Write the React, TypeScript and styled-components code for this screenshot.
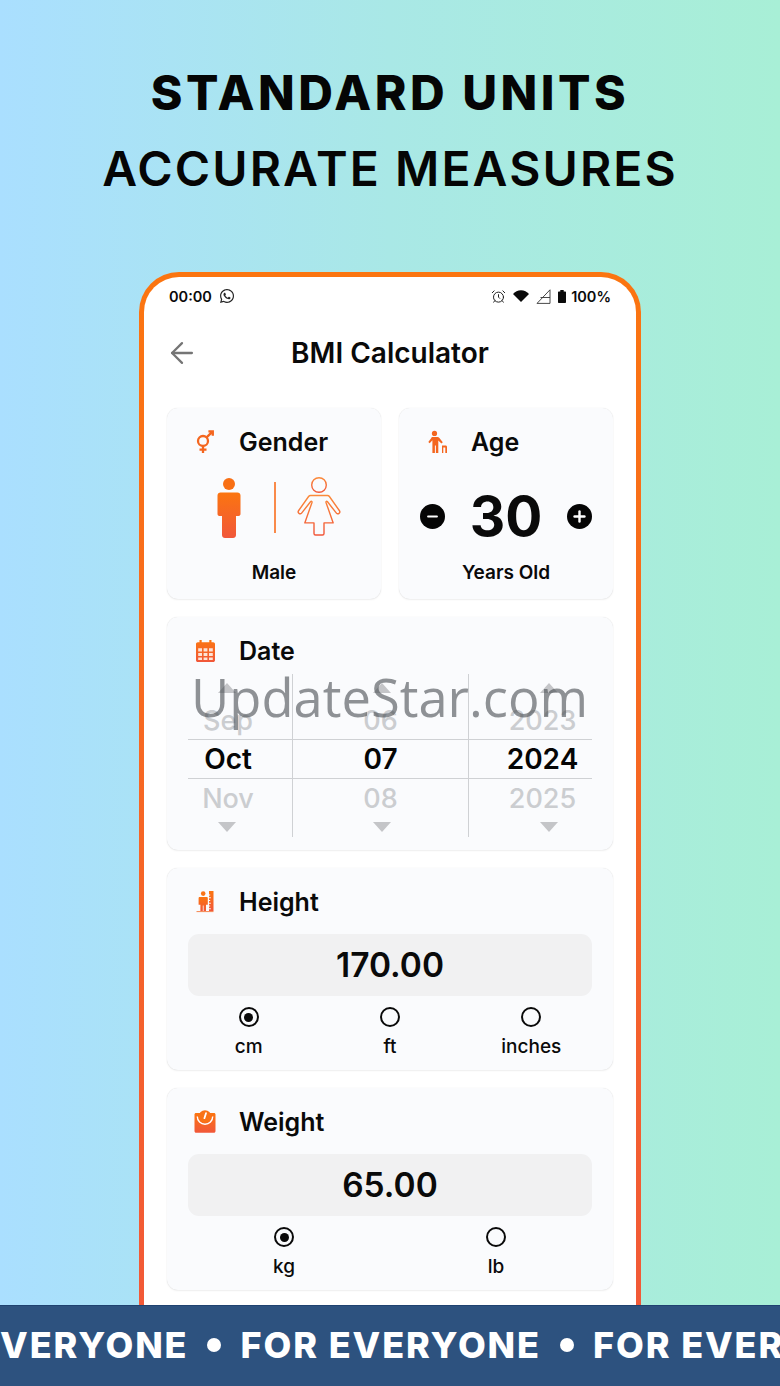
import React from "react";
import styled, { createGlobalStyle } from "styled-components";
import { AlarmClock, ArrowLeft, Minus, Plus } from "lucide-react";
import { FaWhatsapp } from "react-icons/fa";

const GlobalStyle = createGlobalStyle`
  html, body {
    margin: 0;
    padding: 0;
  }

  body {
    font-family: "Inter", "Liberation Sans", sans-serif;
    color: #0a0a0a;
  }

  * {
    box-sizing: border-box;
  }
`;

const IconGradient = ({ id }: { id: string }) => (
  <defs>
    <linearGradient id={id} x1="0" y1="0" x2="0" y2="1">
      <stop offset="0%" stopColor="#fb7510" />
      <stop offset="100%" stopColor="#f1573a" />
    </linearGradient>
  </defs>
);

const GenderIcon = () => (
  <svg width="24" height="24" viewBox="0 0 24 24" fill="none" stroke="#f4661f" strokeWidth="2.3">
    <circle cx="10" cy="11" r="5" />
    <path d="M13.6 7.4 19.5 1.6M15.4 1.4h4.4v4.400M10 16v7M6.500 19.600h7" />
  </svg>
);

const AgeIcon = () => (
  <svg width="24" height="24" viewBox="0 0 24 24" fill="#f4661f">
    <circle cx="9.500" cy="3.400" r="2.600" />
    <path d="M6.500 7h6c.8 0 1.400.3 1.900 1l3.400 4.200-1.400 1.200-3.100-3V23h-2.400v-7.600h-1V23H7.400V10.200l-2.700 3-1.400-1.200 3-4c.2-.6.4-1 .7-1Z" />
    <path d="M17 15.600h3.600c.8 0 1.400.6 1.400 1.400v6h-1.700v-5.600h-2V23H17v-7.400Z" />
  </svg>
);

const CalendarIcon = () => (
  <svg width="24" height="24" viewBox="0 0 24 24">
    <IconGradient id="calendarFill" />
    <path
      fill="url(#calendarFill)"
      d="M6.500 1h2.200v2.200h7.600V1h2.200v2.200h1.700c1 0 1.800.8 1.800 1.800v16.200c0 1-.8 1.800-1.800 1.800H4.800c-1 0-1.800-.8-1.800-1.800V5c0-1 .8-1.800 1.800-1.800h1.700V1Z"
    />
    <path
      fill="#fde3d6"
      d="M5.200 9.300h3.800v3.200H5.200zM10.600 9.300h3.800v3.200h-3.800zM16 9.300h3.800v3.200H16zM5.200 13.900h3.800v3.200H5.200zM10.600 13.900h3.800v3.200h-3.800zM16 13.900h3.800v3.200H16zM5.200 18.500h3.800v2.600H5.200zM10.600 18.500h3.800v2.600h-3.800zM16 18.500h3.800v2.600H16z"
    />
  </svg>
);

const HeightIcon = () => (
  <svg width="24" height="24" viewBox="0 0 24 24">
    <IconGradient id="heightFill" />
    <circle cx="10.200" cy="3.600" r="2.300" fill="#f97316" />
    <path
      fill="url(#heightFill)"
      d="M6.800 7h6.800c.8 0 1.200.5 1.200 1.200v6.600h-1.800V21h-2.400v-5.500h-.8V21H7.400v-6.200H5.600V8.200C5.600 7.500 6 7 6.800 7Z"
    />
    <path
      fill="url(#heightFill)"
      d="M16 1h4.500v20H16v-1.800h1.800v-1H16v-1.700h1.200v-1H16v-1.700h1.800v-1H16V11h1.200v-1H16V8.300h1.800v-1H16V5.600h1.200v-1H16V1Z"
    />
    <path d="M3.500 21.600h17" stroke="#f4661f" strokeWidth="0.8" />
  </svg>
);

const WeightIcon = () => (
  <svg width="24" height="24" viewBox="0 0 24 24">
    <IconGradient id="weightFill" />
    <path
      fill="url(#weightFill)"
      d="M3 3h18c.9 0 1.500.7 1.500 1.500V21c0 1-.7 1.800-1.600 1.800H3.100c-1 0-1.600-.8-1.600-1.800V4.500C1.500 3.700 2.100 3 3 3Z"
    />
    <circle cx="12" cy="6.500" r="6.300" fill="#f97316" />
    <path d="M4.300 6.500a7.700 7.700 0 0 0 15.400 0" fill="none" stroke="#fff" strokeWidth="1.400" />
    <path d="M13 3.200 11.400 8.200" stroke="#fff" strokeWidth="1.800" strokeLinecap="round" />
  </svg>
);

const ManFigure = () => (
  <svg width="24" height="61" viewBox="0 0 24 61">
    <IconGradient id="manFill" />
    <circle cx="12" cy="7" r="6" fill="#f86f14" />
    <path
      fill="url(#manFill)"
      d="M3.500 15.500h17c1.600 0 3 1.300 3 3V37c0 1.200-.8 2-2 2h-2.500v19c0 1.700-1.300 3-3 3H8c-1.700 0-3-1.300-3-3V39H2.500c-1.200 0-2-.8-2-2V18.500c0-1.700 1.400-3 3-3Z"
    />
  </svg>
);

const WomanFigure = () => (
  <svg width="46" height="63" viewBox="0 0 46 63" fill="none" stroke="url(#womanStroke)" strokeWidth="1.400" strokeLinejoin="round">
    <defs>
      <linearGradient id="womanStroke" x1="0" y1="0" x2="0" y2="1">
        <stop offset="0%" stopColor="#fb8a3a" />
        <stop offset="100%" stopColor="#f1573a" />
      </linearGradient>
    </defs>
    <circle cx="23" cy="9" r="7.300" />
    <path d="M14.500 19.500h17c.8 0 1.400.3 1.900 1l9.900 14c.8 1.100.5 2.300-.3 2.900-.9.700-2.100.5-2.800-.5L31.500 25.800c-.8-1-1.800-.6-1.500.6l7.200 20.500H28v10.600c0 .9-.7 1.500-1.500 1.500h-7c-.8 0-1.500-.6-1.500-1.500V46.900H8.800L16 26.400c.3-1.200-.7-1.600-1.500-.6L5.800 36.900c-.7 1-1.900 1.200-2.800.5-.8-.6-1.100-1.800-.3-2.900l9.900-14c.5-.7 1.100-1 1.900-1Z" />
  </svg>
);

const WifiIcon = () => (
  <svg width="16" height="12" viewBox="0 0 16 12">
    <path d="M8 12 0 4c2-2.300 4.800-3.800 8-3.800s6 1.500 8 3.800L8 12Z" fill="#0a0a0a" />
  </svg>
);

const SignalIcon = () => (
  <svg width="15" height="15" viewBox="0 0 15 15" fill="none" stroke="#333" strokeWidth="0.9">
    <path d="M14 .8v13.600H1L14 .8ZM14 8.500l-9.500 0" />
  </svg>
);

const BatteryIcon = () => (
  <svg width="8" height="13" viewBox="0 0 8 13">
    <path d="M2.300 0h3.400v1.400H7c.6 0 1 .4 1 1V12c0 .6-.4 1-1 1H1c-.6 0-1-.4-1-1V2.400c0-.6.4-1 1-1h1.300V0Z" fill="#0a0a0a" />
  </svg>
);

const Radio = ({ label, checked }: { label: string; checked?: boolean }) => (
  <RadioItem>
    <RadioCircle $checked={checked} />
    <RadioLabel>{label}</RadioLabel>
  </RadioItem>
);

const pickerColumns = [
  { prev: "Sep", current: "Oct", next: "Nov", width: 104, textRight: 24, textLeft: 0, arrowRight: 26, arrowLeft: 0 },
  { prev: "06", current: "07", next: "08", width: 176, textRight: 0, textLeft: 0, arrowRight: 0, arrowLeft: 2 },
  { prev: "2023", current: "2024", next: "2025", width: 124, textRight: 0, textLeft: 24, arrowRight: 0, arrowLeft: 36 },
];

const App = () => {
  return (
    <Page>
      <GlobalStyle />
      <Heading>
        <HeadingStrong>STANDARD UNITS</HeadingStrong>
        <HeadingLight>ACCURATE MEASURES</HeadingLight>
      </Heading>

      <PhoneArea>
        <Phone>
          <Screen>
            <StatusBar>
              <StatusGroup>
                <span>00:00</span>
                <FaWhatsapp size={16} color="#222" />
              </StatusGroup>
              <StatusGroup>
                <AlarmClock size={15} strokeWidth={1.6} color="#222" />
                <WifiIcon />
                <SignalIcon />
                <BatteryIcon />
                <BatteryText>100%</BatteryText>
              </StatusGroup>
            </StatusBar>

            <AppBar>
              <BackButton>
                <ArrowLeft size={34} strokeWidth={1.6} color="#757575" />
              </BackButton>
              <AppTitle>BMI Calculator</AppTitle>
            </AppBar>

            <Cards>
              <TopRow>
                <Card>
                  <CardHeader>
                    <HeaderIcon>
                      <GenderIcon />
                    </HeaderIcon>
                    <CardTitle>Gender</CardTitle>
                  </CardHeader>
                  <GenderRow>
                    <ManFigure />
                    <GenderDivider />
                    <WomanFigure />
                  </GenderRow>
                  <GenderCaption>Male</GenderCaption>
                </Card>

                <Card>
                  <CardHeader>
                    <HeaderIcon>
                      <AgeIcon />
                    </HeaderIcon>
                    <CardTitle>Age</CardTitle>
                  </CardHeader>
                  <AgeRow>
                    <RoundButton>
                      <Minus size={15} strokeWidth={3.4} color="#fff" />
                    </RoundButton>
                    <AgeValue>30</AgeValue>
                    <RoundButton>
                      <Plus size={17} strokeWidth={3.4} color="#fff" />
                    </RoundButton>
                  </AgeRow>
                  <AgeCaption>Years Old</AgeCaption>
                </Card>
              </TopRow>

              <Card>
                <CardHeader>
                  <HeaderIcon>
                    <CalendarIcon />
                  </HeaderIcon>
                  <CardTitle>Date</CardTitle>
                </CardHeader>
                <Picker>
                  {pickerColumns.map((col) => (
                    <PickerColumn key={col.current} $width={col.width}>
                      <ArrowSlot $left={col.arrowLeft} $right={col.arrowRight}>
                        <ArrowUp />
                      </ArrowSlot>
                      <PickerCell $left={col.textLeft} $right={col.textRight}>
                        {col.prev}
                      </PickerCell>
                      <PickerCell $left={col.textLeft} $right={col.textRight} $selected>
                        {col.current}
                      </PickerCell>
                      <PickerCell $left={col.textLeft} $right={col.textRight}>
                        {col.next}
                      </PickerCell>
                      <ArrowSlot $left={col.arrowLeft} $right={col.arrowRight}>
                        <ArrowDown />
                      </ArrowSlot>
                    </PickerColumn>
                  ))}
                </Picker>
              </Card>

              <Card>
                <CardHeader>
                  <HeaderIcon>
                    <HeightIcon />
                  </HeaderIcon>
                  <CardTitle>Height</CardTitle>
                </CardHeader>
                <ValueField>170.00</ValueField>
                <RadioRow $count={3}>
                  <Radio label="cm" checked />
                  <Radio label="ft" />
                  <Radio label="inches" />
                </RadioRow>
              </Card>

              <Card>
                <CardHeader>
                  <HeaderIcon>
                    <WeightIcon />
                  </HeaderIcon>
                  <CardTitle>Weight</CardTitle>
                </CardHeader>
                <ValueField>65.00</ValueField>
                <RadioRow $count={2}>
                  <Radio label="kg" checked />
                  <Radio label="lb" />
                </RadioRow>
              </Card>
            </Cards>
          </Screen>
        </Phone>
      </PhoneArea>

      <Banner>
        <Ticker>
          <TickerText>FOR EVERYONE</TickerText>
          <TickerDot />
          <TickerText>FOR EVERYONE</TickerText>
          <TickerDot />
          <TickerText>FOR EVERYONE</TickerText>
        </Ticker>
      </Banner>

      <Watermark>UpdateStar.com</Watermark>
    </Page>
  );
};

const Page = styled.div`
  position: relative;
  width: 780px;
  height: 1386px;
  overflow: hidden;
  display: flex;
  flex-direction: column;
  background: linear-gradient(90deg, #aadfff 0%, #a9e8e6 50%, #a8efd6 100%);
`;

const Heading = styled.div`
  flex: 0 0 272px;
  padding-top: 55px;
  text-align: center;
  color: #050505;
`;

const HeadingStrong = styled.div`
  font-size: 48px;
  line-height: 76px;
  font-weight: 800;
  letter-spacing: 3.500px;
`;

const HeadingLight = styled.div`
  font-size: 48px;
  line-height: 76px;
  font-weight: 600;
  letter-spacing: 2.100px;
`;

const PhoneArea = styled.div`
  flex: 1;
  min-height: 0;
  overflow: hidden;
  display: flex;
  justify-content: center;
`;

const Phone = styled.div`
  flex: 0 0 502px;
  align-self: flex-start;
  padding: 5px;
  border-radius: 40px;
  background: linear-gradient(180deg, #fb7510 0%, #f1573a 100%);
`;

const Screen = styled.div`
  background: #fff;
  border-radius: 35px;
  padding-bottom: 90px;
`;

const StatusBar = styled.div`
  height: 38px;
  padding: 0 25px;
  display: flex;
  align-items: center;
  justify-content: space-between;
  font-size: 14.500px;
  font-weight: 600;
`;

const StatusGroup = styled.div`
  display: flex;
  align-items: center;
  gap: 7px;
`;

const BatteryText = styled.span`
  margin-left: -2px;
`;

const AppBar = styled.div`
  position: relative;
  height: 76px;
  display: flex;
  align-items: center;
  justify-content: center;
`;

const BackButton = styled.div`
  position: absolute;
  left: 21px;
  top: 21px;
  display: flex;
`;

const AppTitle = styled.div`
  font-size: 28px;
  font-weight: 600;
`;

const Cards = styled.div`
  margin-top: 17px;
  padding: 0 23px;
  display: flex;
  flex-direction: column;
  gap: 18px;
`;

const TopRow = styled.div`
  display: grid;
  grid-template-columns: 214px 214px;
  gap: 18px;
`;

const Card = styled.div`
  background: #fafbfd;
  border-radius: 11px;
  padding: 9px 21px 13px;
  box-shadow: 0 0 1px rgba(0, 0, 0, 0.14), 0 1px 2px rgba(0, 0, 0, 0.06);
`;

const CardHeader = styled.div`
  height: 50px;
  display: flex;
  align-items: center;
  gap: 22px;
  padding-left: 5px;
`;

const HeaderIcon = styled.div`
  width: 24px;
  height: 24px;
  display: flex;
`;

const CardTitle = styled.div`
  font-size: 25px;
  font-weight: 600;
`;

const GenderRow = styled.div`
  height: 76px;
  margin-top: 2px;
  padding-left: 29px;
  display: flex;
  align-items: center;
`;

const GenderDivider = styled.div`
  flex: 0 0 1.500px;
  height: 51px;
  background: #f98a4a;
  margin: 0 20px 0 33px;
`;

const CaptionText = styled.div`
  height: 24px;
  line-height: 24px;
  margin-bottom: 1px;
  text-align: center;
  font-size: 19px;
  font-weight: 600;
`;

const GenderCaption = styled(CaptionText)`
  margin-top: 16px;
`;

const AgeCaption = styled(CaptionText)`
  margin-top: 7px;
`;

const AgeRow = styled.div`
  height: 76px;
  margin-top: 11px;
  display: flex;
  align-items: center;
  justify-content: space-between;
`;

const RoundButton = styled.div`
  width: 25px;
  height: 25px;
  border-radius: 50%;
  background: #050505;
  display: flex;
  align-items: center;
  justify-content: center;
`;

const AgeValue = styled.div`
  font-size: 55px;
  font-weight: 700;
  line-height: 60px;
`;

const Picker = styled.div`
  display: flex;
  margin-top: -2px;
`;

const PickerColumn = styled.div<{ $width: number }>`
  width: ${(p) => p.$width}px;
  display: flex;
  flex-direction: column;
  border-left: 1px solid #cfd1d4;

  &:first-child {
    border-left: none;
  }
`;

const PickerCell = styled.div<{ $selected?: boolean; $left: number; $right: number }>`
  height: ${(p) => (p.$selected ? 40 : 38)}px;
  padding: 0 ${(p) => p.$right}px 0 ${(p) => p.$left}px;
  display: flex;
  align-items: center;
  justify-content: center;
  font-size: ${(p) => (p.$selected ? 28 : 27)}px;
  font-weight: ${(p) => (p.$selected ? 600 : 500)};
  color: ${(p) => (p.$selected ? "#050505" : "#cbcdd0")};
  border-top: ${(p) => (p.$selected ? "1px solid #cfd1d4" : "none")};
  border-bottom: ${(p) => (p.$selected ? "1px solid #cfd1d4" : "none")};
`;

const ArrowSlot = styled.div<{ $left: number; $right: number }>`
  height: 20px;
  padding: 0 ${(p) => p.$right}px 0 ${(p) => p.$left}px;
  display: flex;
  align-items: center;
  justify-content: center;

  &:first-child {
    height: 27px;
  }
`;

const ArrowUp = styled.div`
  width: 0;
  height: 0;
  border-left: 9px solid transparent;
  border-right: 9px solid transparent;
  border-bottom: 10px solid #c4c5c8;
`;

const ArrowDown = styled.div`
  width: 0;
  height: 0;
  border-left: 9px solid transparent;
  border-right: 9px solid transparent;
  border-top: 10px solid #c4c5c8;
`;

const ValueField = styled.div`
  height: 62px;
  margin-top: 7px;
  border-radius: 11px;
  background: #f1f1f2;
  display: flex;
  align-items: center;
  justify-content: center;
  font-size: 33.500px;
  font-weight: 600;
`;

const RadioRow = styled.div<{ $count: number }>`
  display: grid;
  grid-template-columns: repeat(${(p) => p.$count}, 1fr);
  column-gap: 20px;
  margin: 11px 0 -2px;
`;

const RadioItem = styled.div`
  display: flex;
  flex-direction: column;
  align-items: center;
  gap: 8px;
`;

const RadioCircle = styled.div<{ $checked?: boolean }>`
  width: 20px;
  height: 20px;
  border-radius: 50%;
  border: 2.500px solid #0a0a0a;
  display: flex;
  align-items: center;
  justify-content: center;

  &::after {
    content: "";
    display: ${(p) => (p.$checked ? "block" : "none")};
    width: 9px;
    height: 9px;
    border-radius: 50%;
    background: #0a0a0a;
  }
`;

const RadioLabel = styled.div`
  font-size: 19px;
  line-height: 24px;
  font-weight: 500;
`;

const Banner = styled.div`
  flex: 0 0 81px;
  background: #2d527f;
  border-top: 1px solid #1f4270;
  padding-bottom: 2px;
  overflow: hidden;
  display: flex;
  align-items: center;
`;

const Ticker = styled.div`
  display: flex;
  align-items: center;
  gap: 19px;
  margin-left: -112px;
  flex-shrink: 0;
`;

const TickerText = styled.div`
  font-size: 36px;
  font-weight: 800;
  letter-spacing: 1.900px;
  color: #fff;
  white-space: nowrap;
`;

const TickerDot = styled.div`
  width: 14px;
  height: 14px;
  border-radius: 50%;
  background: #fff;
  flex-shrink: 0;
`;

const Watermark = styled.div`
  position: absolute;
  left: 191px;
  top: 660px;
  font-family: "Open Sans", "Noto Sans", sans-serif;
  font-size: 52.500px;
  line-height: 74px;
  font-weight: 400;
  color: rgba(70, 75, 80, 0.6);
  white-space: nowrap;
`;

export default App;
